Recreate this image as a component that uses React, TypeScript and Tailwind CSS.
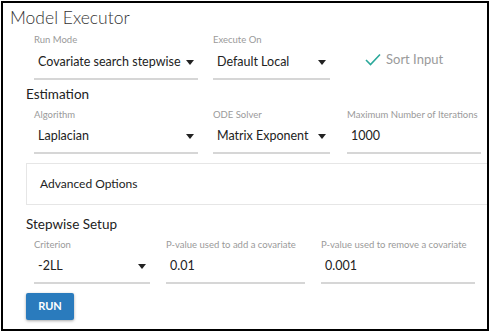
import React from 'react';

const font = { fontFamily: 'Lato, "Open Sans", sans-serif' };

function Caret() {
  return (
    <svg width="8" height="5" viewBox="0 0 8 5" className="shrink-0">
      <path d="M0 0 L8 0 L4 5 Z" fill="#222" />
    </svg>
  );
}

type FieldProps = {
  label: string;
  value: string;
  width: string;
  select?: boolean;
  valueHeight?: string;
};

function Field({ label, value, width, select, valueHeight = 'h-[33px]' }: FieldProps) {
  return (
    <div className={`${width} shrink-0`}>
      <div className="h-[12px] text-[9.5px] leading-[12px] text-[#9a9a9a] whitespace-nowrap">{label}</div>
      <div className={`${valueHeight} flex items-center justify-between border-b-2 border-[#d6d6d6] pl-[4px] pr-[4px]`}>
        <span className="text-[12.5px] text-[#222] whitespace-nowrap">{value}</span>
        {select && <Caret />}
      </div>
    </div>
  );
}

export default function App() {
  return (
    <div className="bg-white w-[490px] h-[332px]" style={font}>
      <div className="ml-px mt-px w-[488px] h-[330px] border-2 border-black bg-white">
        <div className="pl-[7px] mt-[3px] h-[24px] text-[17.5px] leading-[24px] font-light text-[#333]">
          Model Executor
        </div>

        <div className="pl-[23px]">
          <div className="mt-[4px] ml-2 flex items-end">
            <Field label="Run Mode" value="Covariate search stepwise" width="w-[164px]" select valueHeight="h-[34px]" />
            <div className="w-[15px]" />
            <Field label="Execute On" value="Default Local" width="w-[117px]" select valueHeight="h-[34px]" />
            <div className="ml-[35px] mb-[11px] flex items-center gap-[5px]">
              <svg width="16" height="13" viewBox="0 0 16 13">
                <path d="M1 7 L5.5 11.5 L15 1.5" fill="none" stroke="#2aa89a" strokeWidth="1.6" />
              </svg>
              <span className="text-[13px] text-[#9a9a9a]">Sort Input</span>
            </div>
          </div>

          <div className="mt-[4px] h-[20px] text-[13.5px] leading-[20px] text-[#222]">Estimation</div>

          <div className="mt-[5px] ml-2 flex">
            <Field label="Algorithm" value="Laplacian" width="w-[164px]" select />
            <div className="w-[15px]" />
            <Field label="ODE Solver" value="Matrix Exponent" width="w-[117px]" select />
            <div className="w-[17px]" />
            <Field label="Maximum Number of Iterations" value="1000" width="w-[134px]" />
          </div>

          <div className="mt-[9px] h-[42px] border border-r-0 border-[#e6e6e6] flex items-center pl-[13px]">
            <span className="text-[12px] text-[#222]">Advanced Options</span>
          </div>

          <div className="mt-[9px] h-[20px] text-[13.5px] leading-[20px] text-[#222]">Stepwise Setup</div>

          <div className="mt-[5px] ml-2 flex">
            <Field label="Criterion" value="-2LL" width="w-[116px]" select />
            <div className="w-[16px]" />
            <Field label="P-value used to add a covariate" value="0.01" width="w-[139px]" />
            <div className="w-[16px]" />
            <Field label="P-value used to remove a covariate" value="0.001" width="w-[154px]" />
          </div>

          <button className="mt-[9px] w-[48px] h-[27px] bg-[#2a7bbd] text-white text-[11px] font-bold rounded-[2px] shadow-[0_1px_3px_rgba(0,0,0,0.35)]">
            RUN
          </button>
        </div>
      </div>
    </div>
  );
}
